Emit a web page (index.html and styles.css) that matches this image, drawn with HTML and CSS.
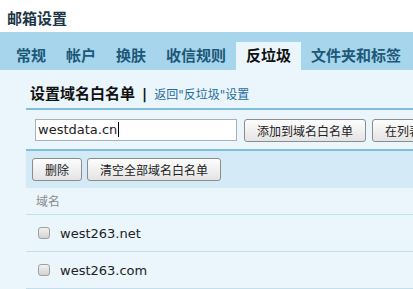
FILE: index.html
```html
<!DOCTYPE html>
<html lang="zh-CN">
  <head>
    <meta charset="UTF-8" />
    <title>邮箱设置</title>
    <link rel="stylesheet" href="styles.css">
  </head>
  <body>
    <div class="title">邮箱设置</div>
    <div class="tabs">
      <span class="tab">常规</span>
      <span class="tab">帐户</span>
      <span class="tab">换肤</span>
      <span class="tab">收信规则</span>
      <span class="tab active">反垃圾</span>
      <span class="tab">文件夹和标签</span>
    </div>
    <div class="main">
      <div class="head">
        <span class="head-title">设置域名白名单</span>
        <span class="sep">|</span>
        <a class="back" href="#">返回"反垃圾"设置</a>
      </div>
      <div class="addrow">
        <div class="box">westdata.cn</div>
        <button class="btn">添加到域名白名单</button>
        <button class="btn">在列表中查找</button>
      </div>
      <div class="toolbar">
        <button class="btn">删除</button>
        <button class="btn">清空全部域名白名单</button>
      </div>
      <div class="listhead">域名</div>
      <div class="row"><input type="checkbox" class="check" /><span>west263.net</span></div>
      <div class="row"><input type="checkbox" class="check" /><span>west263.com</span></div>
    </div>
  </body>
</html>
```

FILE: styles.css
```css
html,
body {
  margin: 0;
  height: 100%;
  overflow: hidden;
}

body {
  display: flex;
  flex-direction: column;
  font-family: "DejaVu Sans", "Noto Sans CJK SC", sans-serif;
  color: #111;
  background-color: #fff;
  white-space: nowrap;
}

.title {
  flex: none;
  height: 32px;
  box-sizing: border-box;
  padding: 6px 0 0 7px;
  line-height: 26px;
  font-size: 15px;
  font-weight: bold;
  color: #1b3646;
}

.tabs {
  flex: none;
  display: flex;
  height: 38px;
  box-sizing: border-box;
  padding: 10px 0 0 6px;
  background-color: #a7d5eb;
}
.tab {
  flex: none;
  padding: 0 10px;
  line-height: 28px;
  font-size: 15px;
  font-weight: bold;
  color: #1c5878;
}
.tab.active {
  background-color: #eaf6fc;
  color: #111;
}

.main {
  flex: 1;
  min-height: 0;
  padding-left: 26px;
  background-color: #eaf6fc;
}

.head {
  padding: 14px 0 3px 4px;
  line-height: 20px;
  border-bottom: 2px solid #80bedb;
}
.head-title {
  font-size: 15px;
  font-weight: bold;
}
.sep {
  margin: 0 2px 0 2px;
  font-size: 14px;
  font-weight: bold;
}
.back {
  font-size: 12px;
  color: #1f6c9a;
  text-decoration: none;
}

.addrow {
  display: flex;
  align-items: flex-start;
  gap: 6px;
  padding: 9px 0 7px 9px;
}
.addrow > * {
  flex: none;
}
.box {
  width: 202px;
  height: 22px;
  box-sizing: border-box;
  margin-right: 1px;
  padding-left: 2px;
  border: 1px solid #a9b1b8;
  background-color: #fff;
  font-size: 13px;
  line-height: 20px;
  color: #222;
}
.box::after {
  content: "";
  display: inline-block;
  width: 1px;
  height: 15px;
  margin-left: 1px;
  vertical-align: -3px;
  background-color: #000;
}

.btn {
  flex: none;
  height: 23px;
  padding: 0 12px;
  border: 1px solid #8c8c8c;
  border-radius: 3px;
  background: linear-gradient(#fdfdfd, #e4e4e4);
  font-family: "Noto Sans CJK SC", sans-serif;
  font-size: 12px;
  line-height: 21px;
  color: #222;
}

.toolbar {
  display: flex;
  gap: 5px;
  padding: 7px 0 7px 6px;
  border-top: 2px solid #80bedb;
  background-color: #d4eaf7;
}

.listhead {
  height: 26px;
  padding-left: 10px;
  line-height: 26px;
  font-size: 12px;
  font-family: "Noto Sans CJK SC", sans-serif;
  color: #8a8a8a;
  border-bottom: 1px solid #c3dfee;
}

.row {
  display: flex;
  align-items: center;
  height: 36px;
  padding-left: 12px;
  font-size: 13px;
  color: #222;
  border-bottom: 1px solid #c3dfee;
}
.check {
  appearance: none;
  width: 12px;
  height: 12px;
  margin: 0 10px 0 0;
  border: 1px solid #a0a0a0;
  border-radius: 3px;
  background: linear-gradient(#f2f2f2, #d2d2d2);
}
```
